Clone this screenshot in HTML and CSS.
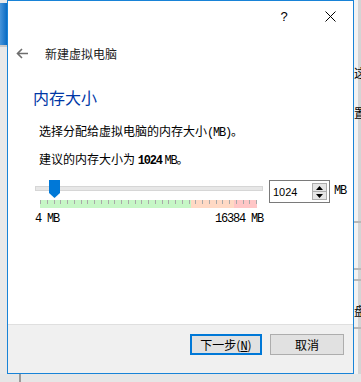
FILE: index.html
```html
<!DOCTYPE html>
<html lang="zh">
<head>
<meta charset="utf-8">
<title>新建虚拟电脑</title>
<link rel="stylesheet" href="styles.css">
</head>
<body>
<div class="screen">
  <div class="row">
    <div class="left-strip">
      <div class="ls-blue"></div>
      <div class="ls-line"></div>
    </div>
    <div class="dialog">
      <div class="titlebar">
        <div class="tb-btn help">?</div>
        <div class="tb-btn close">
          <svg width="11" height="11" viewBox="0 0 11 11"><path d="M0.5 0.5 L10.5 10.5 M10.5 0.5 L0.5 10.5" stroke="#000" stroke-width="1" fill="none"/></svg>
        </div>
      </div>
      <div class="header">
        <svg class="back" width="12" height="11" viewBox="0 0 12 11"><path d="M12 5.5 H1.5 M6 1 L1.5 5.5 L6 10" stroke="#6d6d6d" stroke-width="1.6" fill="none"/></svg>
        <span class="title">新建虚拟电脑</span>
      </div>
      <div class="content">
        <h1 class="heading">内存大小</h1>
        <p class="line l1">选择分配给虚拟电脑的内存大小<span class="mono">(MB)</span>。</p>
        <p class="line l2">建议的内存大小为 <b class="mono">1024</b> <span class="mono">MB</span>。</p>
        <div class="mem-row">
          <div class="slider">
            <div class="track-area">
              <div class="track"></div>
              <svg class="thumb" width="11" height="18" viewBox="0 0 11 18"><polygon points="0,0 11,0 11,13 5.5,18 0,13" fill="#0078d7"/></svg>
            </div>
            <div class="ticks">
              <i></i><i></i><i></i><i></i><i></i><i></i><i></i><i></i><i></i><i></i><i></i>
              <i></i><i></i><i></i><i></i><i></i><i></i><i></i><i></i><i></i><i></i><i></i>
              <i></i><i></i><i></i><i></i><i></i><i></i><i></i><i></i><i></i><i></i><i></i>
            </div>
            <div class="labels mono"><span>4 MB</span><span>16384 MB</span></div>
          </div>
          <div class="spin">
            <span class="spin-value">1024</span>
            <div class="spin-btns">
              <div class="sb"><svg width="7" height="4" viewBox="0 0 7 4"><polygon points="0,4 7,4 3.5,0" fill="#000"/></svg></div>
              <div class="sb"><svg width="7" height="4" viewBox="0 0 7 4"><polygon points="0,0 7,0 3.5,4" fill="#000"/></svg></div>
            </div>
          </div>
          <span class="unit mono">MB</span>
        </div>
      </div>
      <div class="footer">
        <button class="btn primary">下一步(<u class="mono">N</u>)</button>
        <button class="btn">取消</button>
      </div>
    </div>
    <div class="right-strip">
      <div class="rs-char c1">这</div>
      <div class="rs-char c2">置</div>
      <div class="rs-line l1"></div>
      <div class="rs-line l2"></div>
      <div class="rs-line l3"></div>
      <div class="rs-char c3">盘</div>
      <div class="rs-line l4"></div>
    </div>
  </div>
  <div class="bottom-strip"><div class="bs-line"></div></div>
</div>
</body>
</html>
```

FILE: styles.css
```css
html, body {
  margin: 0;
  padding: 0;
}
body {
  font-family: "Noto Sans CJK SC", "Noto Sans", sans-serif;
  font-size: 12px;
  color: #000;
}
.screen {
  width: 361px;
  height: 382px;
  overflow: hidden;
  background: #ececec;
}
.row {
  display: flex;
  height: 374px;
}
.left-strip {
  width: 7px;
  display: flex;
  flex-direction: column;
  background: #e9e9e9;
}
.ls-blue {
  margin-top: 3px;
  height: 42px;
  background: linear-gradient(to right, #4694da, #0a6cc4);
}
.ls-line {
  height: 2px;
  background: #c9c9c9;
}
.dialog {
  width: 347px;
  box-sizing: border-box;
  border: 1px solid #1883d7;
  background: #fff;
  display: flex;
  flex-direction: column;
}
.titlebar {
  height: 30px;
  display: flex;
  justify-content: flex-end;
}
.tb-btn {
  width: 46px;
  height: 30px;
  display: flex;
  align-items: center;
  justify-content: center;
}
.help {
  font-family: "Liberation Sans", sans-serif;
  font-size: 13px;
}
.header {
  margin-top: 12px;
  height: 20px;
  display: flex;
  align-items: center;
}
.back {
  margin-left: 8px;
}
.title {
  margin-left: 17px;
  color: #222;
}
.content {
  flex: 1;
  padding-left: 25px;
}
.heading {
  margin: 24px 0 0;
  font-size: 16px;
  font-weight: normal;
  line-height: 20px;
  color: #0037a6;
}
.line {
  margin: 0;
  padding-left: 6px;
  line-height: 18px;
}
.l1 { margin-top: 15px; }
.l2 { margin-top: 8px; }
.mono {
  font-family: "Liberation Mono", monospace;
  font-size: 12px;
  letter-spacing: -1.2px;
}
b.mono { font-weight: bold; }
.mem-row {
  margin-top: 10px;
  padding-left: 2px;
  display: flex;
  align-items: flex-start;
}
.slider {
  width: 228px;
}
.track-area {
  position: relative;
  height: 18px;
}
.track {
  position: relative;
  top: 6px;
  height: 3px;
  border: 1px solid #d6d6d6;
  background: #e7e7e7;
}
.thumb {
  position: absolute;
  left: 14px;
  top: 0;
}
.ticks {
  margin: 2px 0 0 5px;
  width: 217px;
  height: 8px;
  display: flex;
  justify-content: space-between;
  background: linear-gradient(to right, #c6f7c6 0 151px, #ffd9c4 151px 194px, #ffc6c6 194px);
}
.ticks i {
  width: 1px;
  height: 4px;
  background: #a9a9a9;
}
.labels {
  margin-top: 5px;
  display: flex;
  justify-content: space-between;
  line-height: 12px;
}
.spin {
  margin-left: 6px;
  width: 61px;
  height: 23px;
  box-sizing: border-box;
  border: 1px solid #7a7a7a;
  display: flex;
  align-items: center;
}
.spin-value {
  flex: 1;
  padding-left: 3px;
  font-family: "Liberation Sans", sans-serif;
  font-size: 11px;
}
.spin-btns {
  width: 15px;
  margin-right: 2px;
  display: flex;
  flex-direction: column;
}
.sb {
  height: 7px;
  box-sizing: content-box;
  border: 1px solid #adadad;
  background: #e5e5e5;
  display: flex;
  align-items: center;
  justify-content: center;
}
.sb + .sb { border-top: none; }
.unit {
  margin-left: 4px;
  line-height: 23px;
}
.footer {
  height: 39px;
  border-top: 1px solid #dfdfdf;
  background: #f0f0f0;
  display: flex;
  justify-content: flex-end;
  align-items: flex-start;
  gap: 8px;
  padding: 9px 9px 0 0;
  box-sizing: content-box;
}
.btn {
  height: 21px;
  width: 74px;
  box-sizing: border-box;
  border: 1px solid #adadad;
  background: #e1e1e1;
  font-family: "Noto Sans CJK SC", sans-serif;
  font-size: 12px;
  color: #000;
  padding: 0;
  line-height: 19px;
}
.btn.primary {
  width: 72px;
  border: 2px solid #0078d7;
  line-height: 17px;
}
.btn u.mono {
  letter-spacing: 0;
}
.right-strip {
  width: 7px;
  overflow: hidden;
  white-space: nowrap;
  background: linear-gradient(to right, #f2f2f2 0 4px, #d4d4d4 4px 7px);
}
.rs-char {
  line-height: 14px;
}
.c1 { margin-top: 66px; }
.c2 { margin-top: 26px; }
.c3 { margin-top: 23px; }
.rs-line {
  height: 2px;
  background: #b8b8b8;
}
.rs-line.l1 { margin-top: 101px; }
.rs-line.l2 { margin-top: 45px; }
.rs-line.l3 { margin-top: 9px; }
.rs-line.l4 { margin-top: 9px; }
.bottom-strip {
  height: 8px;
  display: flex;
  background: #e6e6e6;
}
.bs-line {
  margin-left: 19px;
  width: 2px;
  background: #9a9a9a;
}
```
